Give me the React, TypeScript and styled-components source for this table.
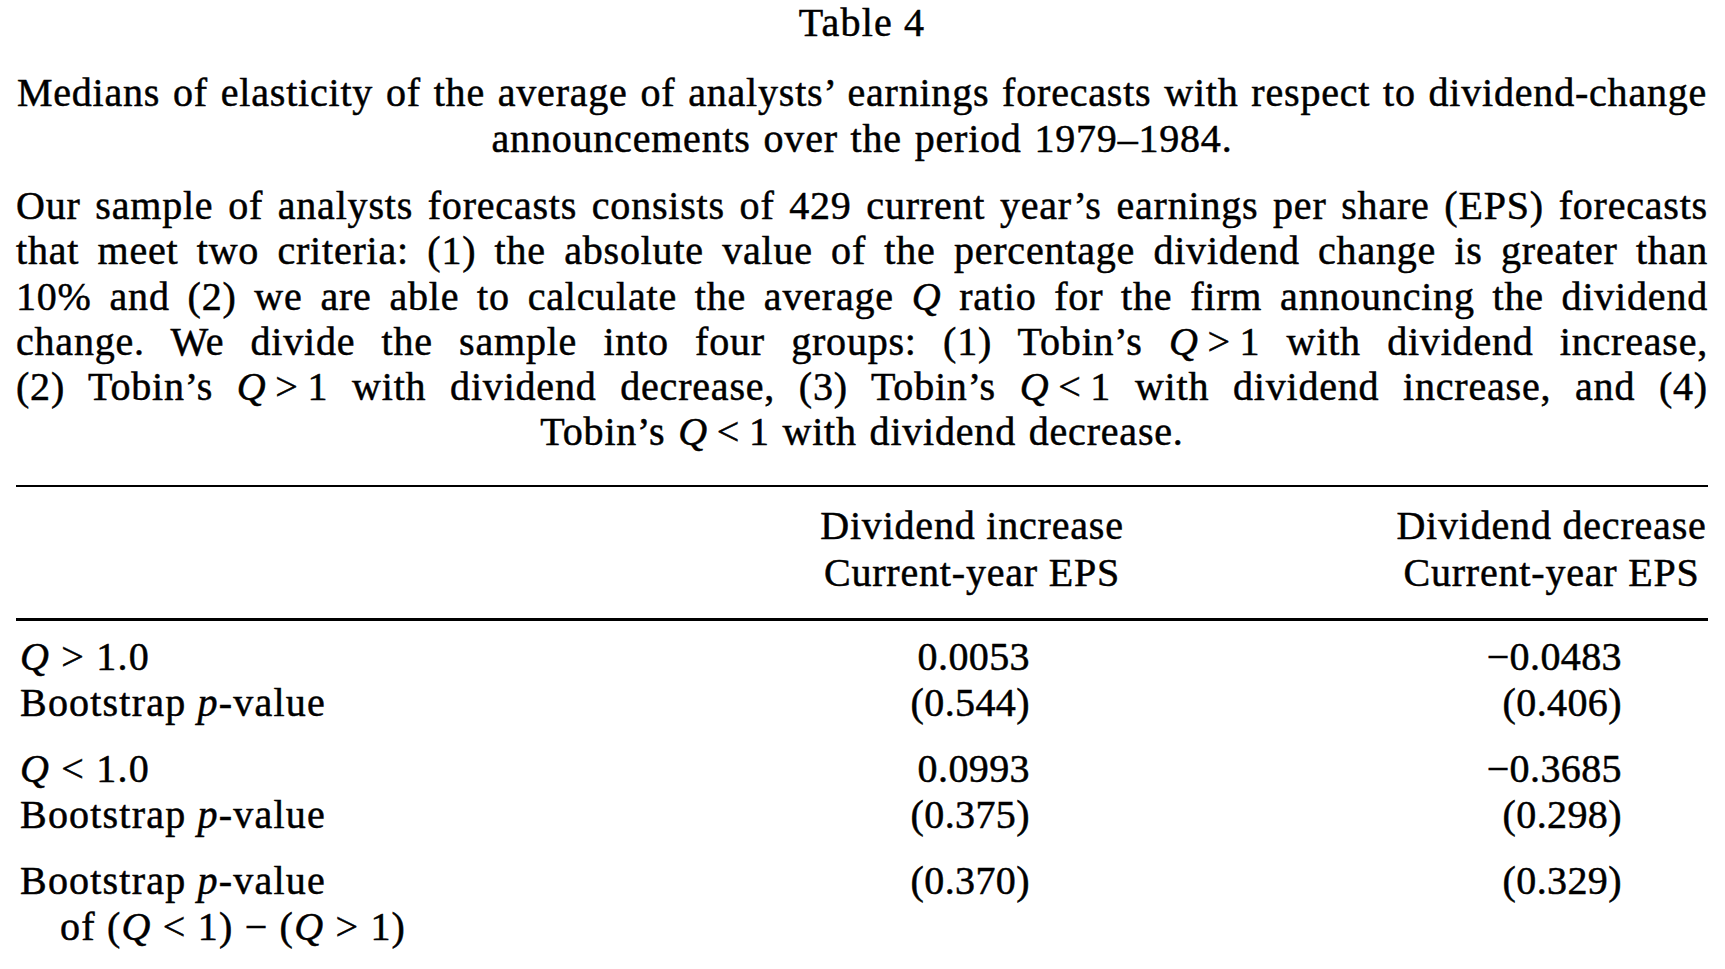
import React from "react";
import styled, { createGlobalStyle } from "styled-components";

const GlobalStyle = createGlobalStyle`
  html, body {
    margin: 0;
    padding: 0;
    background: #ffffff;
  }
  body {
    font-family: "Liberation Serif", "Times New Roman", serif;
    color: #000000;
  }
`;

const Page = styled.div`
  box-sizing: content-box;
  width: 1692px;
  padding: 0 17px 0 16px;
  font-size: 40px;
  letter-spacing: 0.8px;
  -webkit-text-stroke: 0.5px #000;
`;

const Title = styled.h1`
  margin: 0;
  font-size: 40px;
  font-weight: 400;
  line-height: 45.5px;
  text-align: center;
  letter-spacing: 1.2px;
`;

const Caption = styled.p`
  margin: 24.5px 0 0;
  line-height: 45.5px;
  text-align: center;
  word-spacing: 2px;
`;

const Paragraph = styled.div`
  margin-top: 22px;
  line-height: 45.3px;
`;

const Line = styled.div<{ $center?: boolean }>`
  text-align: ${(p) => (p.$center ? "center" : "justify")};
  text-align-last: ${(p) => (p.$center ? "center" : "justify")};
  word-spacing: ${(p) => (p.$center ? "2px" : "0")};
`;

const Var = styled.i`
  font-style: italic;
`;

const Rule = styled.hr<{ $mt: number; $t: number }>`
  margin: ${(p) => p.$mt}px 0 0;
  border: none;
  height: ${(p) => p.$t}px;
  background: #000;
`;

const Header = styled.div`
  margin-top: 15px;
  display: grid;
  grid-template-columns: 784px 344px 1fr 313px;
  line-height: 47px;
`;

const HeadCell = styled.div<{ $col: number }>`
  grid-column: ${(p) => p.$col};
  text-align: center;
`;

const Body = styled.div`
  margin-top: 13px;
  display: flex;
  flex-direction: column;
  gap: 19px;
`;

const Group = styled.div`
  display: grid;
  grid-template-columns: 784px 344px 1fr 313px;
  line-height: 46.5px;
`;

const Label = styled.div<{ $indent?: boolean }>`
  grid-column: 1;
  padding-left: ${(p) => (p.$indent ? 44 : 4)}px;
  letter-spacing: 1.2px;
`;

const Value = styled.div<{ $col: number; $pr: number }>`
  grid-column: ${(p) => p.$col};
  text-align: right;
  padding-right: ${(p) => p.$pr}px;
  letter-spacing: 0.4px;
`;

type RowData = {
  label: React.ReactNode;
  indent?: boolean;
  inc?: string;
  dec?: string;
};

const MINUS = "\u2212";

const groups: RowData[][] = [
  [
    { label: <><Var>Q</Var> &gt; 1.0</>, inc: "0.0053", dec: `${MINUS}0.0483` },
    { label: <>Bootstrap <Var>p</Var>-value</>, inc: "(0.544)", dec: "(0.406)" },
  ],
  [
    { label: <><Var>Q</Var> &lt; 1.0</>, inc: "0.0993", dec: `${MINUS}0.3685` },
    { label: <>Bootstrap <Var>p</Var>-value</>, inc: "(0.375)", dec: "(0.298)" },
  ],
  [
    { label: <>Bootstrap <Var>p</Var>-value</>, inc: "(0.370)", dec: "(0.329)" },
    {
      label: <>of (<Var>Q</Var> &lt; 1) {MINUS} (<Var>Q</Var> &gt; 1)</>,
      indent: true,
    },
  ],
];

const TS = "\u2009";

export default function App() {
  return (
    <>
      <GlobalStyle />
      <Page>
        <Title>Table 4</Title>
        <Caption>
          Medians of elasticity of the average of analysts’ earnings forecasts with respect to dividend-change
          <br />
          announcements over the period 1979–1984.
        </Caption>
        <Paragraph>
          <Line>
            Our sample of analysts forecasts consists of 429 current year’s earnings per share (EPS) forecasts
          </Line>
          <Line>
            that meet two criteria: (1) the absolute value of the percentage dividend change is greater than
          </Line>
          <Line>
            10% and (2) we are able to calculate the average <Var>Q</Var> ratio for the firm announcing the dividend
          </Line>
          <Line>
            change. We divide the sample into four groups: (1) Tobin’s <Var>Q</Var>{TS}&gt;{TS}1 with dividend increase,
          </Line>
          <Line>
            (2) Tobin’s <Var>Q</Var>{TS}&gt;{TS}1 with dividend decrease, (3) Tobin’s <Var>Q</Var>{TS}&lt;{TS}1 with dividend increase, and (4)
          </Line>
          <Line $center>
            Tobin’s <Var>Q</Var>{TS}&lt;{TS}1 with dividend decrease.
          </Line>
        </Paragraph>
        <Rule $mt={30} $t={2} />
        <Header>
          <HeadCell $col={2}>
            Dividend increase
            <br />
            Current-year EPS
          </HeadCell>
          <HeadCell $col={4}>
            Dividend decrease
            <br />
            Current-year EPS
          </HeadCell>
        </Header>
        <Rule $mt={22} $t={3} />
        <Body>
          {groups.map((g, gi) => (
            <Group key={gi}>
              {g.map((r, ri) => (
                <React.Fragment key={ri}>
                  <Label $indent={r.indent}>{r.label}</Label>
                  <Value $col={2} $pr={114}>{r.inc ?? ""}</Value>
                  <Value $col={4} $pr={86}>{r.dec ?? ""}</Value>
                </React.Fragment>
              ))}
            </Group>
          ))}
        </Body>
      </Page>
    </>
  );
}
